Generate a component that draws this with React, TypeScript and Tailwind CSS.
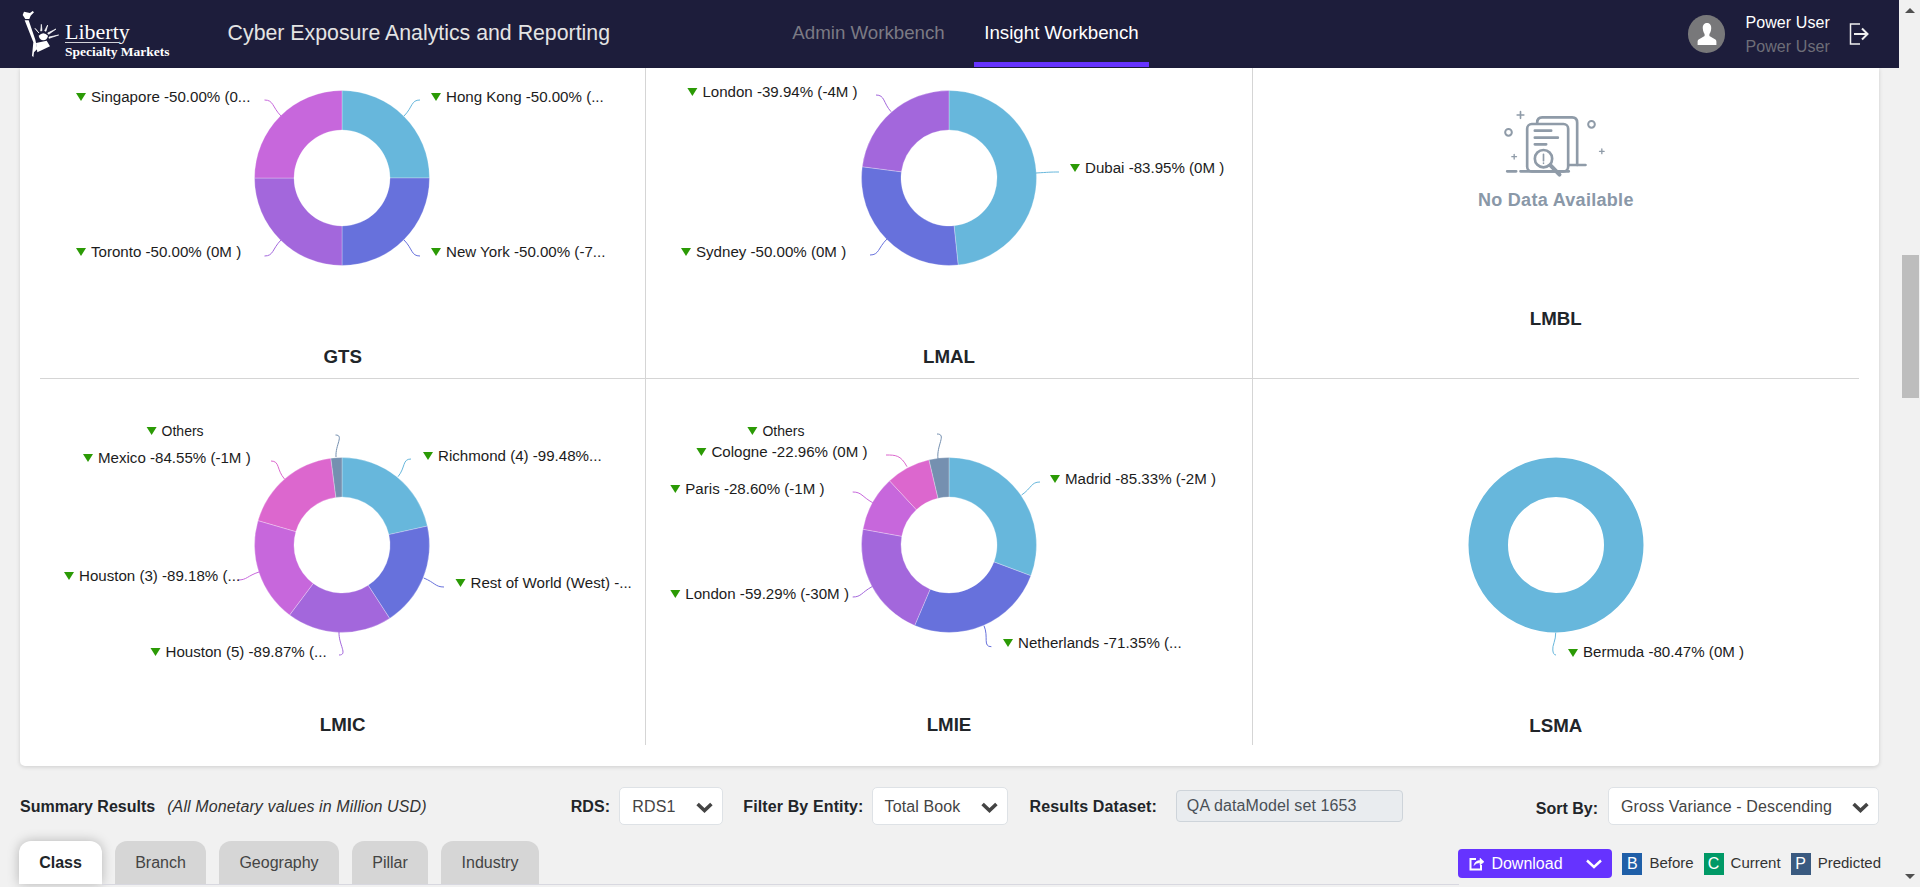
const C = { blue: '#67b7dc', indigo: '#6771dc', purple: '#a367dc', violet: '#c767dc', pink: '#dc67ce', slate: '#7590b0' }

type Label = { text: string; x: number; y: number }
type Leader = { from: [number, number]; to: [number, number] }
type Slice = { end: number; color: string; label?: Label; leader?: Leader }

function point(cx: number, cy: number, r: number, deg: number) {
  const a = ((deg - 90) * Math.PI) / 180
  return [cx + r * Math.cos(a), cy + r * Math.sin(a)]
}

function arc(cx: number, cy: number, start: number, end: number) {
  const R = 87.5
  const r = 48
  const [x1, y1] = point(cx, cy, R, start)
  const [x2, y2] = point(cx, cy, R, end)
  const [x3, y3] = point(cx, cy, r, end)
  const [x4, y4] = point(cx, cy, r, start)
  const big = end - start > 180 ? 1 : 0
  return `M${x1} ${y1}A${R} ${R} 0 ${big} 1 ${x2} ${y2}L${x3} ${y3}A${r} ${r} 0 ${big} 0 ${x4} ${y4}Z`
}

// leader leaves the slice radially and arrives level with the label
function curve({ from, to }: Leader, cx: number, cy: number) {
  const [x1, y1] = from
  const [x2, y2] = to
  const dist = Math.hypot(x2 - x1, y2 - y1)
  const len = Math.hypot(x1 - cx, y1 - cy)
  const c1x = x1 + ((x1 - cx) / len) * dist * 0.55
  const c1y = y1 + ((y1 - cy) / len) * dist * 0.55
  const side = x2 >= cx ? -1 : 1
  const c2x = x2 + side * dist * 0.4
  return `M${x1} ${y1}C${c1x} ${c1y} ${c2x} ${y2} ${x2} ${y2}`
}

// all chart coordinates are page pixels, the viewBox moves them into the cell
function Donut({ ox, oy, h, cx, cy, slices }: { ox: number; oy: number; h: number; cx: number; cy: number; slices: Slice[] }) {
  let start = 0
  return (
    <svg width={605} height={h} viewBox={`${ox} ${oy} 605 ${h}`} className="block overflow-visible">
      {slices.map((s, i) => {
        const d = arc(cx, cy, start, s.end)
        start = s.end
        return <path key={i} d={d} fill={s.color} stroke="#ffffff" strokeOpacity={0.4} strokeWidth={0.7} />
      })}
      {slices.map((s, i) => (
        <g key={i}>
          {s.leader && <path d={curve(s.leader, cx, cy)} fill="none" stroke={s.color} strokeWidth={1} />}
          {s.label && (
            <>
              <polygon points={`${s.label.x - 15},${s.label.y - 4} ${s.label.x - 5},${s.label.y - 4} ${s.label.x - 10},${s.label.y + 4}`} fill="#2b9a05" />
              <text x={s.label.x} y={s.label.y + 5} fontSize={s.label.text === 'Others' ? 14 : 15.1} fill="#1c1c1c">{s.label.text}</text>
            </>
          )}
        </g>
      ))}
    </svg>
  )
}

function Full({ ox, oy, h }: { ox: number; oy: number; h: number }) {
  const cx = 1556
  const cy = 545
  return (
    <svg width={605} height={h} viewBox={`${ox} ${oy} 605 ${h}`} className="block overflow-visible">
      <circle cx={cx} cy={cy} r={67.75} fill="none" stroke={C.blue} strokeWidth={39.5} />
      <path d="M1555.7 632.7C1556 640 1552 646 1552.8 650C1553 653 1554 655 1556 655" fill="none" stroke={C.blue} />
      <polygon points="1568,649 1578,649 1573,657" fill="#2b9a05" />
      <text x={1583} y={657} fontSize={15.1} fill="#1c1c1c">Bermuda -80.47% (0M )</text>
    </svg>
  )
}

function Title({ children }: { children: string }) {
  return <div className="h-[36px] flex items-center justify-center text-[18.72px] font-bold text-[#212529]">{children}</div>
}

function NoDataIcon() {
  return (
    <svg width={107} height={70} viewBox="130 60 320 210" fill="none" stroke="#8f9ba8" strokeWidth={8} strokeLinecap="round" className="block">
      <path d="M235 98Q235 82 250 82H340Q355 82 355 98V225" />
      <path d="M330 225H380M185 244H330M145 244H172" />
      <rect x={205} y={102} width={123} height={142} rx={14} fill="#fff" />
      <path d="M228 122H277M228 143H297M228 163H262" />
      <circle cx={254} cy={206} r={26} fill="#fff" />
      <path d="M254 193V212M254 219V220" strokeWidth={5} />
      <path d="M275 226L302 254" strokeWidth={12} />
      <circle cx={149} cy={127} r={10} strokeWidth={6} />
      <circle cx={398} cy={103} r={10} strokeWidth={6} />
      <path d="M185 65V85M175 75H195" strokeWidth={5} />
      <path d="M166 193V207M159 200H173M429 177V191M422 184H436" strokeWidth={4} />
    </svg>
  )
}

function Logo() {
  return (
    <div className="flex items-center">
      <svg width={40} height={50} viewBox="60 20 120 150" fill="#fff" className="ml-[20px] shrink-0">
        <path d="M68 38L72 28L90 32L98 26L102 30L92 40L88 50L76 50Z" />
        <path d="M74 54H86L106 112L112 140L102 150L100 165L96 160L100 120Z" />
        <path d="M108 122L140 115L150 132L128 142L112 150Z" />
        <path d="M116 100Q130 85 144 100Q142 112 130 114Q118 112 116 100Z" />
        <path d="M113 88L117 92L105 78ZM122 86L126 85L124 66ZM134 85L138 87L143 68ZM143 92L146 96L168 80ZM147 104V108L176 98Z" stroke="#fff" strokeWidth={2} />
      </svg>
      <div className="ml-[5px] mt-[14px] font-['Liberation_Serif',serif] text-white">
        <div className="text-[22px] leading-[20px] border-b border-white/80 w-[54px] whitespace-nowrap">Liberty</div>
        <div className="text-[13.5px] leading-[16px] font-bold whitespace-nowrap mt-[1px]">Specialty Markets</div>
      </div>
    </div>
  )
}

function Chevron({ className }: { className: string }) {
  return (
    <svg width={17} height={11} viewBox="0 0 17 11" fill="none" stroke="currentColor" strokeWidth={3.6} className={className}>
      <path d="M1.6 2L8.5 8.5L15.4 2" />
    </svg>
  )
}

function Select({ label, width, className }: { label: string; width: string; className: string }) {
  return (
    <div className={`${width} ${className} h-[38px] bg-white border border-[#dee2e6] rounded-[5px] flex items-center justify-between pl-[12px] pr-[9px] text-[16px] text-[#444]`}>
      <span className="whitespace-nowrap mt-[1px]">{label}</span>
      <Chevron className="text-[#444] mt-[2px]" />
    </div>
  )
}

function Tab({ label, width, active }: { label: string; width: string; active?: boolean }) {
  return (
    <div className={`${width} h-[43px] rounded-t-[12px] flex items-center justify-center text-[16px] ${active ? 'bg-white font-bold text-[#212529] shadow-[0_0_12px_rgba(0,0,0,0.25)]' : 'bg-[#d6d6d6] text-[#444]'}`}>
      {label}
    </div>
  )
}

function Legend({ letter, label, color }: { letter: string; label: string; color: string }) {
  return (
    <div className="flex items-center">
      <span className={`${color} w-[20px] h-[22px] flex items-center justify-center text-white text-[16px]`}>{letter}</span>
      <span className="ml-[7px] text-[15px] text-[#333]">{label}</span>
    </div>
  )
}

export default function App() {
  return (
    <div className="flex h-[887px] w-[1920px] overflow-hidden bg-[#f1f1f1] font-['Liberation_Sans',Arial,sans-serif]">
      <div className="w-[1899px] shrink-0 flex flex-col">
        <header className="h-[68px] shrink-0 bg-[#1d1d3b] flex items-center text-white">
          <Logo />
          <div className="ml-[58px] text-[21.3px] text-[#e4e4e4] whitespace-nowrap">Cyber Exposure Analytics and Reporting</div>
          <nav className="absolute left-[781px] top-0 h-[68px] flex">
            <div className="w-[175px] h-[67px] flex items-center justify-center pb-[1px] text-[18.72px] text-[#7b7a84]">Admin Workbench</div>
            <div className="w-[175px] ml-[18px] h-[67px] flex items-center justify-center pt-[4px] text-[18.72px] text-white border-b-[5px] border-[#6633ff]">Insight Workbench</div>
          </nav>
          <div className="ml-auto flex items-center">
            <div className="w-[37px] h-[38px] rounded-full bg-[#78787a] flex items-center justify-center">
              <svg width={20} height={24} viewBox="0 0 20 24" fill="#fff">
                <path d="M10 1C6.8 1 5.6 3.6 5.8 6.4C6 9.2 7 11 7.6 12V14L1.6 17.5C0.8 18 0.6 19 0.6 20V23H19.4V20C19.4 19 19.2 18 18.4 17.5L12.4 14V12C13 11 14 9.2 14.2 6.4C14.4 3.6 13.2 1 10 1Z" />
              </svg>
            </div>
            <div className="ml-[20px] mt-[2px] text-[16px] leading-[24px] whitespace-nowrap tracking-[0.1px]">
              <div className="text-white">Power User</div>
              <div className="text-[#6e6e78]">Power User</div>
            </div>
            <svg width={20} height={22} viewBox="0 0 20 22" fill="none" stroke="#eee" strokeWidth={1.5} className="ml-[19px] mr-[30px]">
              <path d="M11 1H1.5V21H11" />
              <path d="M5 11H18M13 5.5L18.5 11L13 16.5" strokeWidth={2} />
            </svg>
          </div>
        </header>

        <main className="mx-[20px] h-[698px] shrink-0 bg-white rounded-b-[5px] shadow-[0_1px_4px_rgba(0,0,0,0.15)] px-[20px] grid grid-cols-3 grid-rows-[311px_366px] overflow-hidden">
          <div className="border-r border-b border-[#d5d5d5]">
            <Donut ox={40} oy={68} h={271} cx={342} cy={178} slices={[
              { end: 90, color: C.blue, label: { text: 'Hong Kong -50.00% (...', x: 446, y: 97 }, leader: { from: [404, 116], to: [420, 100] } },
              { end: 180, color: C.indigo, label: { text: 'New York -50.00% (-7...', x: 446, y: 252 }, leader: { from: [404, 240], to: [420, 256] } },
              { end: 270, color: C.purple, label: { text: 'Toronto -50.00% (0M )', x: 91, y: 252 }, leader: { from: [281, 240], to: [264.5, 256] } },
              { end: 360, color: C.violet, label: { text: 'Singapore -50.00% (0...', x: 91, y: 97 }, leader: { from: [281, 116], to: [264.5, 100] } },
            ]} />
            <Title>GTS</Title>
          </div>
          <div className="border-r border-b border-[#d5d5d5]">
            <Donut ox={646} oy={68} h={271} cx={949} cy={178} slices={[
              { end: 174, color: C.blue, label: { text: 'Dubai -83.95% (0M )', x: 1085, y: 168 }, leader: { from: [1036, 173], to: [1059, 172] } },
              { end: 277.4, color: C.indigo, label: { text: 'Sydney -50.00% (0M )', x: 696, y: 252 }, leader: { from: [887, 239], to: [870, 255] } },
              { end: 360, color: C.purple, label: { text: 'London -39.94% (-4M )', x: 702.4, y: 92 }, leader: { from: [891, 111.7], to: [876, 95] } },
            ]} />
            <Title>LMAL</Title>
          </div>
          <div className="border-b border-[#d5d5d5] flex flex-col items-center">
            <div className="mt-[42px]"><NoDataIcon /></div>
            <div className="mt-[7px] text-[18px] leading-[27px] font-bold text-[#8a98a8] tracking-[0.3px]">No Data Available</div>
            <div className="mt-[87px]"><Title>LMBL</Title></div>
          </div>
          <div className="border-r border-[#d5d5d5]">
            <Donut ox={40} oy={379} h={328} cx={342} cy={545} slices={[
              { end: 77.5, color: C.blue, label: { text: 'Richmond (4) -99.48%...', x: 438, y: 456 }, leader: { from: [398, 476.7], to: [411, 459] } },
              { end: 147, color: C.indigo, label: { text: 'Rest of World (West) -...', x: 470.5, y: 583 }, leader: { from: [423.7, 578], to: [444, 587] } },
              { end: 216.8, color: C.purple, label: { text: 'Houston (5) -89.87% (...', x: 165.5, y: 652 }, leader: { from: [339, 632], to: [339, 655] } },
              { end: 286.2, color: C.violet, label: { text: 'Houston (3) -89.18% (...', x: 79, y: 576 }, leader: { from: [259, 572], to: [238, 580] } },
              { end: 352.7, color: C.pink, label: { text: 'Mexico -84.55% (-1M )', x: 98, y: 458 }, leader: { from: [284.5, 479], to: [271, 461] } },
              { end: 360, color: C.slate, label: { text: 'Others', x: 161.6, y: 431 }, leader: { from: [336, 457], to: [335.5, 435] } },
            ]} />
            <Title>LMIC</Title>
          </div>
          <div className="border-r border-[#d5d5d5]">
            <Donut ox={646} oy={379} h={328} cx={949} cy={545} slices={[
              { end: 110.6, color: C.blue, label: { text: 'Madrid -85.33% (-2M )', x: 1065, y: 479 }, leader: { from: [1021.6, 495], to: [1040, 482] } },
              { end: 203.1, color: C.indigo, label: { text: 'Netherlands -71.35% (...', x: 1018, y: 643 }, leader: { from: [984, 625.7], to: [991.4, 646.7] } },
              { end: 280.4, color: C.purple, label: { text: 'London -59.29% (-30M )', x: 685.3, y: 594 }, leader: { from: [872, 586.7], to: [852.7, 597] } },
              { end: 317.2, color: C.violet, label: { text: 'Paris -28.60% (-1M )', x: 685.3, y: 489 }, leader: { from: [872.7, 502.7], to: [852.7, 492] } },
              { end: 346.8, color: C.pink, label: { text: 'Cologne -22.96% (0M )', x: 711.4, y: 452 }, leader: { from: [907, 466.7], to: [886, 455] } },
              { end: 360, color: C.slate, label: { text: 'Others', x: 762.4, y: 431 }, leader: { from: [938, 459], to: [937, 434] } },
            ]} />
            <Title>LMIE</Title>
          </div>
          <div>
            <Full ox={1253} oy={379} h={329} />
            <Title>LSMA</Title>
          </div>
        </main>

        <section className="px-[20px] mt-[21px] h-[38px] shrink-0 flex items-center text-[16px] whitespace-nowrap tracking-[0.12px]">
          <span className="font-bold text-[#212529] mt-[2px] tracking-normal">Summary Results</span>
          <span className="ml-[12px] mt-[2px] italic text-[#333]">(All Monetary values in Million USD)</span>
          <span className="ml-[144px] mt-[2px] font-bold text-[#212529]">RDS:</span>
          <Select label="RDS1" width="w-[104px]" className="ml-[9px]" />
          <span className="ml-[20px] mt-[2px] font-bold text-[#212529]">Filter By Entity:</span>
          <Select label="Total Book" width="w-[136px]" className="ml-[8px]" />
          <span className="ml-[22px] mt-[2px] font-bold text-[#212529]">Results Dataset:</span>
          <div className="ml-[19px] w-[227px] h-[32px] bg-[#e9ecef] border border-[#ced4da] rounded-[4px] flex items-center pl-[10px] text-[#495057]">QA dataModel set 1653</div>
          <span className="ml-auto font-bold text-[#212529] mt-[6px] tracking-normal">Sort By:</span>
          <Select label="Gross Variance - Descending" width="w-[271px]" className="ml-[10px]" />
        </section>

        <section className="pl-[20px] pr-[18px] mt-[16px] flex items-start shrink-0">
          <div className="flex gap-[13px] -ml-[1px]">
            <Tab label="Class" width="w-[83px]" active />
            <Tab label="Branch" width="w-[91px]" />
            <Tab label="Geography" width="w-[120px]" />
            <Tab label="Pillar" width="w-[76px]" />
            <Tab label="Industry" width="w-[98px]" />
          </div>
          <div className="ml-auto mt-[8px] flex items-center">
            <div className="w-[154px] h-[29px] bg-[#6633ff] rounded-[4px] flex items-center text-white text-[16px] pl-[11px]">
              <svg width={16} height={15} viewBox="0 0 16 15" fill="none" stroke="#fff" strokeWidth={2}>
                <path d="M7 3H1.5V13.5H12V9" />
                <path d="M5 9.5C5.5 6 8 4.6 11 4.6V2L15 5.8L11 9.2V6.8C8.5 6.8 6.5 7.5 5 9.5Z" fill="#fff" strokeWidth={0.5} />
              </svg>
              <span className="ml-[6px]">Download</span>
              <svg width={16} height={10} viewBox="0 0 16 10" fill="none" stroke="#fff" strokeWidth={2.4} className="ml-[23px]">
                <path d="M1 1.5L8 8L15 1.5" />
              </svg>
            </div>
            <div className="ml-[10px] flex gap-[10px]">
              <Legend letter="B" label="Before" color="bg-[#1f5fa8]" />
              <Legend letter="C" label="Current" color="bg-[#009966]" />
              <Legend letter="P" label="Predicted" color="bg-[#3a5a80]" />
            </div>
          </div>
        </section>
        <div className="ml-[102px] w-[1357px] h-[3px] shrink-0 border-t border-[#d8d8e0]" />
      </div>

      <aside className="w-[21px] shrink-0 flex flex-col items-center">
        <div className="h-[21px] flex items-center justify-center">
          <div className="w-0 h-0 border-x-[5px] border-x-transparent border-b-[5px] border-b-[#505050]" />
        </div>
        <div className="mt-[234px] ml-[1px] w-[17px] h-[143px] bg-[#bdbdbd]" />
        <div className="mt-auto h-[21px] flex items-center justify-center">
          <div className="w-0 h-0 border-x-[5px] border-x-transparent border-t-[5px] border-t-[#505050]" />
        </div>
      </aside>
    </div>
  )
}
